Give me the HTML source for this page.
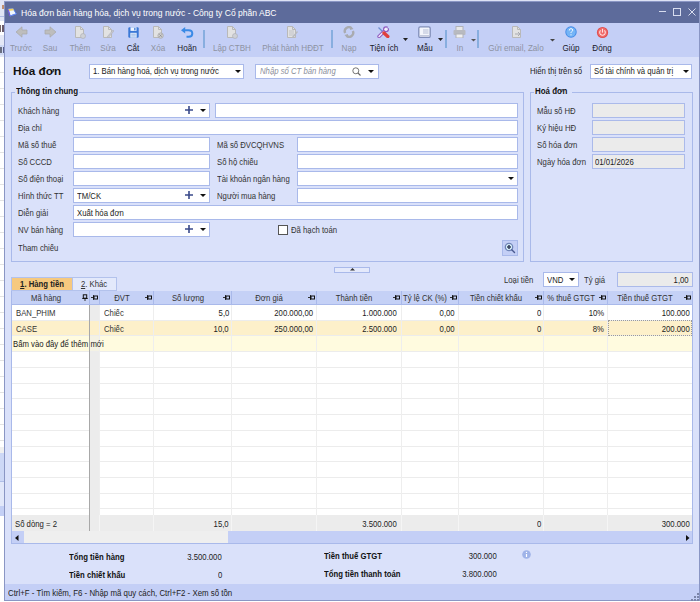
<!DOCTYPE html>
<html><head><meta charset="utf-8"><style>
html,body{margin:0;padding:0;width:700px;height:602px;overflow:hidden;position:relative;background:#f2f4fb}
.b{position:absolute;display:block}
.t{position:absolute;white-space:nowrap;font-family:"Liberation Sans",sans-serif}
</style></head><body>
<div class=b style='left:0px;top:0px;width:700px;height:602px;background:#ffffff;'></div>
<div class=b style='left:0px;top:0px;width:4px;height:21px;background:#e0e5f5;'></div>
<div class=b style='left:0px;top:16px;width:4px;height:1px;background:#b0bde6;'></div>
<div class=b style='left:2px;top:5px;width:2px;height:4px;background:#c09070;'></div>
<div class=b style='left:0px;top:21px;width:4px;height:14px;background:#ffffff;'></div>
<div class=b style='left:0px;top:25px;width:1px;height:7px;background:#7a6a6a;'></div>
<div class=b style='left:2px;top:25px;width:2px;height:7px;background:#6a5a6a;'></div>
<div class=b style='left:0px;top:35px;width:4px;height:10px;background:#e4e8f6;'></div>
<div class=b style='left:0px;top:45px;width:4px;height:10px;background:#d0daf5;'></div>
<div class=b style='left:0px;top:47px;width:2px;height:6px;background:#6a6f80;'></div>
<div class=b style='left:3px;top:47px;width:1px;height:6px;background:#5a6090;'></div>
<div class=b style='left:0px;top:55px;width:4px;height:2px;background:#e0e6f8;'></div>
<div class=b style='left:0px;top:72px;width:4px;height:1px;background:#e3e3e3;'></div>
<div class=b style='left:0px;top:88px;width:4px;height:1px;background:#e3e3e3;'></div>
<div class=b style='left:0px;top:104px;width:4px;height:1px;background:#e3e3e3;'></div>
<div class=b style='left:0px;top:120px;width:4px;height:1px;background:#e3e3e3;'></div>
<div class=b style='left:0px;top:136px;width:4px;height:1px;background:#e3e3e3;'></div>
<div class=b style='left:0px;top:152px;width:4px;height:1px;background:#e3e3e3;'></div>
<div class=b style='left:0px;top:168px;width:4px;height:1px;background:#e3e3e3;'></div>
<div class=b style='left:0px;top:184px;width:4px;height:1px;background:#e3e3e3;'></div>
<div class=b style='left:0px;top:200px;width:4px;height:1px;background:#e3e3e3;'></div>
<div class=b style='left:0px;top:216px;width:4px;height:1px;background:#e3e3e3;'></div>
<div class=b style='left:0px;top:232px;width:4px;height:1px;background:#e3e3e3;'></div>
<div class=b style='left:0px;top:248px;width:4px;height:1px;background:#e3e3e3;'></div>
<div class=b style='left:0px;top:264px;width:4px;height:1px;background:#e3e3e3;'></div>
<div class=b style='left:0px;top:280px;width:4px;height:1px;background:#e3e3e3;'></div>
<div class=b style='left:0px;top:296px;width:4px;height:1px;background:#e3e3e3;'></div>
<div class=b style='left:0px;top:312px;width:4px;height:1px;background:#e3e3e3;'></div>
<div class=b style='left:0px;top:328px;width:4px;height:1px;background:#e3e3e3;'></div>
<div class=b style='left:0px;top:344px;width:4px;height:1px;background:#e3e3e3;'></div>
<div class=b style='left:0px;top:360px;width:4px;height:1px;background:#e3e3e3;'></div>
<div class=b style='left:0px;top:376px;width:4px;height:1px;background:#e3e3e3;'></div>
<div class=b style='left:0px;top:392px;width:4px;height:1px;background:#e3e3e3;'></div>
<div class=b style='left:0px;top:408px;width:4px;height:1px;background:#e3e3e3;'></div>
<div class=b style='left:0px;top:424px;width:4px;height:1px;background:#e3e3e3;'></div>
<div class=b style='left:0px;top:440px;width:4px;height:1px;background:#e3e3e3;'></div>
<div class=b style='left:0px;top:456px;width:4px;height:1px;background:#e3e3e3;'></div>
<div class=b style='left:0px;top:472px;width:4px;height:1px;background:#e3e3e3;'></div>
<div class=b style='left:0px;top:488px;width:4px;height:1px;background:#e3e3e3;'></div>
<div class=b style='left:0px;top:504px;width:4px;height:1px;background:#e3e3e3;'></div>
<div class=b style='left:0px;top:520px;width:4px;height:1px;background:#e3e3e3;'></div>
<div class=b style='left:0px;top:536px;width:4px;height:1px;background:#e3e3e3;'></div>
<div class=b style='left:0px;top:552px;width:4px;height:1px;background:#e3e3e3;'></div>
<div class=b style='left:0px;top:568px;width:4px;height:1px;background:#e3e3e3;'></div>
<div class=b style='left:0px;top:584px;width:4px;height:1px;background:#e3e3e3;'></div>
<div class=b style='left:0px;top:600px;width:4px;height:1px;background:#e3e3e3;'></div>
<div class=b style='left:0px;top:447px;width:4px;height:6px;background:#f0f0f0;'></div>
<div class=b style='left:0px;top:453px;width:4px;height:28px;background:#cdd8f6;'></div>
<div class=b style='left:0px;top:481px;width:4px;height:1px;background:#b0bfe8;'></div>
<div class=b style='left:0px;top:482px;width:4px;height:24px;background:#e2e8fa;'></div>
<div class=b style='left:0px;top:506px;width:4px;height:10px;background:#c3cff5;'></div>
<div class=b style='left:0px;top:516px;width:4px;height:86px;background:#ffffff;'></div>
<div class=b style='left:0px;top:0px;width:700px;height:1px;background:#dde2f5;'></div>
<div class=b style='left:4px;top:1px;width:696px;height:600px;background:#8a96c4;'></div>
<div class=b style='left:5px;top:2px;width:694px;height:21px;background:#5d6b9b;'></div>
<div class=b style='left:5px;top:23px;width:694px;height:34px;background:#c4cff6;'></div>
<div class=b style='left:5px;top:57px;width:694px;height:527px;background:#dae1fa;'></div>
<div class=b style='left:5px;top:584px;width:694px;height:16px;background:#c4cff6;'></div>
<svg class=b style='left:6px;top:6px' width=12 height=12 viewBox='0 0 12 12'><path d='M2 3 L7 2.5 L10.3 7.8 L4 10 Z' fill='#eef6ff' stroke='#4f7ae8' stroke-width='.9'/><path d='M2 3 L7 2.5 L8 4.2 L2.6 5 Z' fill='#f0d060'/><path d='M2.2 3.5 L4 10' stroke='#7a5ad8' stroke-width='1.1'/><path d='M4 10 L10.3 7.8' stroke='#6a8af0' stroke-width='.9'/></svg>
<div class=t style='top:6.5px;font-size:9.5px;line-height:12.5px;color:#ffffff;font-weight:normal;left:21px;transform:scaleX(0.9);transform-origin:0 0;'>Hóa đơn bán hàng hóa, dịch vụ trong nước - Công ty Cổ phần ABC</div>
<div class=b style='left:659px;top:11px;width:7px;height:1px;background:#d8ddef;'></div>
<svg class=b style='left:672px;top:7px' width=9 height=10 viewBox='0 0 9 10'><rect x='1.5' y='1.5' width='7' height='7' fill='none' stroke='#d8ddef'/></svg>
<svg class=b style='left:687px;top:7px' width=10 height=10 viewBox='0 0 10 10'><path d='M1.5 1.5 L8.5 8.5 M8.5 1.5 L1.5 8.5' stroke='#d8ddef' stroke-width='1'/></svg>
<svg class=b style='left:15px;top:26px' width=14 height=12 viewBox='0 0 14 12'><path d='M1 6 L7 .8 L7 4 L12 4 L12 8 L7 8 L7 11.2 Z' fill='#bdbdbd' stroke='#a8a8a8' stroke-width='.7'/></svg>
<div class=t style='top:41.6px;font-size:9.6px;line-height:12.6px;color:#8e93a3;font-weight:normal;left:21px;transform:translateX(-50%) scaleX(0.84375);'>Trước</div>
<svg class=b style='left:43px;top:26px' width=14 height=12 viewBox='0 0 14 12'><path d='M13 6 L7 .8 L7 4 L2 4 L2 8 L7 8 L7 11.2 Z' fill='#bdbdbd' stroke='#a8a8a8' stroke-width='.7'/></svg>
<div class=t style='top:41.6px;font-size:9.6px;line-height:12.6px;color:#8e93a3;font-weight:normal;left:50px;transform:translateX(-50%) scaleX(0.84375);'>Sau</div>
<svg class=b style='left:74px;top:26px' width=12 height=13 viewBox='0 0 12 13'><path d='M1.5 .5 L6.5 .5 L9.5 3.5 L9.5 11.5 L1.5 11.5 Z' fill='#e2e2e2' stroke='#b9b9b9'/><path d='M6.5 .5 L6.5 3.5 L9.5 3.5' fill='none' stroke='#b9b9b9'/><circle cx='9' cy='10' r='2.5' fill='#cfd1d6' stroke='#a9abb2' stroke-width='.6'/></svg>
<div class=t style='top:41.6px;font-size:9.6px;line-height:12.6px;color:#8e93a3;font-weight:normal;left:80px;transform:translateX(-50%) scaleX(0.84375);'>Thêm</div>
<svg class=b style='left:102px;top:26px' width=12 height=13 viewBox='0 0 12 13'><path d='M1.5 .5 L6.5 .5 L9.5 3.5 L9.5 11.5 L1.5 11.5 Z' fill='#e2e2e2' stroke='#b9b9b9'/><path d='M6.5 .5 L6.5 3.5 L9.5 3.5' fill='none' stroke='#b9b9b9'/><path d='M5 11 L11 4 L12 5 L6 12 Z' fill='#c8cad0' stroke='#a9abb2' stroke-width='.5'/></svg>
<div class=t style='top:41.6px;font-size:9.6px;line-height:12.6px;color:#8e93a3;font-weight:normal;left:108px;transform:translateX(-50%) scaleX(0.84375);'>Sửa</div>
<svg class=b style='left:128px;top:27px' width=11 height=11 viewBox='0 0 11 11'><rect x='.3' y='.3' width='10.4' height='10.4' rx='1.2' fill='#3b78d6'/><rect x='2.5' y='.3' width='6' height='3.6' fill='#eef4ff'/><rect x='6.2' y='.9' width='1.3' height='2.4' fill='#3b78d6'/><rect x='2.3' y='5.8' width='6.4' height='4.9' fill='#dce8fa'/><path d='M3.3 7.3 L7.7 7.3 M3.3 8.9 L7.7 8.9' stroke='#8fb0e0' stroke-width='.7'/></svg>
<div class=t style='top:41.6px;font-size:9.6px;line-height:12.6px;color:#1a1a2a;font-weight:normal;left:133px;transform:translateX(-50%) scaleX(0.84375);'>Cắt</div>
<svg class=b style='left:152px;top:26px' width=12 height=13 viewBox='0 0 12 13'><path d='M1.5 .5 L6.5 .5 L9.5 3.5 L9.5 11.5 L1.5 11.5 Z' fill='#e2e2e2' stroke='#b9b9b9'/><path d='M6.5 .5 L6.5 3.5 L9.5 3.5' fill='none' stroke='#b9b9b9'/><circle cx='8.6' cy='9.6' r='2.7' fill='#d0d0d0' stroke='#a8a8a8' stroke-width='.8'/><path d='M7.4 8.4 L9.8 10.8 M9.8 8.4 L7.4 10.8' stroke='#8a8a8a' stroke-width='.8'/></svg>
<div class=t style='top:41.6px;font-size:9.6px;line-height:12.6px;color:#8e93a3;font-weight:normal;left:158px;transform:translateX(-50%) scaleX(0.84375);'>Xóa</div>
<svg class=b style='left:181px;top:27px' width=13 height=11 viewBox='0 0 13 11'><path d='M0 3.2 L4.2 0 L4.2 6.4 Z' fill='#3a8ae6'/><path d='M3.5 3.2 L7.5 3.2 Q11.3 3.2 11.3 6.6 Q11.3 9.8 7.8 9.8 L5.5 9.8' fill='none' stroke='#3a8ae6' stroke-width='2'/></svg>
<div class=t style='top:41.6px;font-size:9.6px;line-height:12.6px;color:#1a1a2a;font-weight:normal;left:187px;transform:translateX(-50%) scaleX(0.84375);'>Hoãn</div>
<div class=b style='left:203px;top:30px;width:2px;height:18px;background:#88aedf;'></div>
<svg class=b style='left:226px;top:26px' width=12 height=13 viewBox='0 0 12 13'><path d='M1.5 .5 L6.5 .5 L9.5 3.5 L9.5 11.5 L1.5 11.5 Z' fill='#e2e2e2' stroke='#b9b9b9'/><path d='M6.5 .5 L6.5 3.5 L9.5 3.5' fill='none' stroke='#b9b9b9'/><circle cx='9' cy='10' r='2.5' fill='#cfd1d6' stroke='#a9abb2' stroke-width='.6'/></svg>
<div class=t style='top:41.6px;font-size:9.6px;line-height:12.6px;color:#8e93a3;font-weight:normal;left:232px;transform:translateX(-50%) scaleX(0.84375);'>Lập CTBH</div>
<svg class=b style='left:286px;top:26px' width=12 height=13 viewBox='0 0 12 13'><path d='M1.5 .5 L6.5 .5 L9.5 3.5 L9.5 11.5 L1.5 11.5 Z' fill='#e2e2e2' stroke='#b9b9b9'/><path d='M6.5 .5 L6.5 3.5 L9.5 3.5' fill='none' stroke='#b9b9b9'/><path d='M3 5 L8 5 M3 7 L8 7 M3 9 L8 9' stroke='#c0c2c8'/><path d='M6 11 L11 5 L12 6 L7 12 Z' fill='#b8bac0'/></svg>
<div class=t style='top:41.6px;font-size:9.6px;line-height:12.6px;color:#8e93a3;font-weight:normal;left:293px;transform:translateX(-50%) scaleX(0.84375);'>Phát hành HĐĐT</div>
<div class=b style='left:331px;top:30px;width:2px;height:18px;background:#88aedf;'></div>
<svg class=b style='left:343px;top:26px' width=12 height=12 viewBox='0 0 12 12'><path d='M2.2 7 A4 4 0 0 1 8.5 2.3' fill='none' stroke='#a9abb0' stroke-width='2.4'/><path d='M9.8 5 A4 4 0 0 1 3.5 9.7' fill='none' stroke='#a9abb0' stroke-width='2.4'/><path d='M7.5 0 L10.5 3 L7 4 Z' fill='#a9abb0'/><path d='M4.5 12 L1.5 9 L5 8 Z' fill='#a9abb0'/></svg>
<div class=t style='top:41.6px;font-size:9.6px;line-height:12.6px;color:#8e93a3;font-weight:normal;left:349px;transform:translateX(-50%) scaleX(0.84375);'>Nạp</div>
<svg class=b style='left:377px;top:26px' width=13 height=12 viewBox='0 0 13 12'><path d='M1.5 1.5 L6.5 6.5' stroke='#6f8fd0' stroke-width='1.3'/><path d='M2 10.5 L7.5 5' stroke='#8f5bbf' stroke-width='3.4' stroke-linecap='round'/><path d='M2 10.5 L7.5 5' stroke='#f6f0fb' stroke-width='1.3' stroke-linecap='round'/><circle cx='9' cy='3.3' r='3' fill='#8f5bbf'/><circle cx='9' cy='3.3' r='1.7' fill='#f6f0fb'/><path d='M9 3.3 L12 0 L13 1.5 Z' fill='#c4cff6'/><path d='M7 7 L10.8 10.6' stroke='#e0403c' stroke-width='3.4' stroke-linecap='round'/></svg>
<div class=t style='top:41.6px;font-size:9.6px;line-height:12.6px;color:#1a1a2a;font-weight:normal;left:384px;transform:translateX(-50%) scaleX(0.84375);'>Tiện ích</div>
<svg class=b style='left:403px;top:38px' width=6 height=4 viewBox='0 0 6 4'><path d='M0 0 L5 0 L2.5 3 Z' fill='#222'/></svg>
<svg class=b style='left:418px;top:26px' width=13 height=12 viewBox='0 0 13 12'><rect x='.8' y='.8' width='11.4' height='10.6' rx='1.5' fill='#f3f5fb' stroke='#7f8db8' stroke-width='1.3'/><rect x='2' y='9' width='9' height='1.6' fill='#c3c9dc'/><rect x='5' y='3' width='5.5' height='5' fill='#d4d9e8'/></svg>
<div class=t style='top:41.6px;font-size:9.6px;line-height:12.6px;color:#1a1a2a;font-weight:normal;left:425px;transform:translateX(-50%) scaleX(0.84375);'>Mẫu</div>
<svg class=b style='left:438px;top:38px' width=6 height=4 viewBox='0 0 6 4'><path d='M0 0 L5 0 L2.5 3 Z' fill='#222'/></svg>
<div class=b style='left:445px;top:30px;width:2px;height:18px;background:#88aedf;'></div>
<svg class=b style='left:453px;top:26px' width=13 height=12 viewBox='0 0 13 12'><rect x='3' y='.5' width='7' height='4' fill='#e8e8e8' stroke='#b0b2b8'/><rect x='.5' y='4' width='12' height='5' rx='1' fill='#b8bac0'/><rect x='3' y='8' width='7' height='4' fill='#f0f0f0' stroke='#b0b2b8'/></svg>
<div class=t style='top:41.6px;font-size:9.6px;line-height:12.6px;color:#8e93a3;font-weight:normal;left:460px;transform:translateX(-50%) scaleX(0.84375);'>In</div>
<svg class=b style='left:471px;top:39px' width=5 height=3 viewBox='0 0 5 3'><path d='M0 0 L5 0 L2.5 2.5 Z' fill='#555'/></svg>
<div class=b style='left:477px;top:30px;width:2px;height:18px;background:#88aedf;'></div>
<svg class=b style='left:511px;top:26px' width=12 height=13 viewBox='0 0 12 13'><path d='M1.5 .5 L6.5 .5 L9.5 3.5 L9.5 11.5 L1.5 11.5 Z' fill='#e2e2e2' stroke='#b9b9b9'/><path d='M6.5 .5 L6.5 3.5 L9.5 3.5' fill='none' stroke='#b9b9b9'/><path d='M4 8 L9 8 M7 6 L9 8 L7 10' stroke='#a9abb2' fill='none'/></svg>
<div class=t style='top:41.6px;font-size:9.6px;line-height:12.6px;color:#8e93a3;font-weight:normal;left:516px;transform:translateX(-50%) scaleX(0.84375);'>Gửi email, Zalo</div>
<svg class=b style='left:550px;top:39px' width=5 height=3 viewBox='0 0 5 3'><path d='M0 0 L5 0 L2.5 2.5 Z' fill='#444'/></svg>
<svg class=b style='left:565px;top:26px' width=12 height=12 viewBox='0 0 12 12'><circle cx='6' cy='6' r='5.7' fill='#3f88e6'/><circle cx='6' cy='6' r='4.8' fill='#74b4f6'/><path d='M4.3 4.5 Q4.3 2.6 6 2.6 Q7.7 2.6 7.7 4.2 Q7.7 5.2 6.6 5.7 Q6 6 6 7' fill='none' stroke='#fff' stroke-width='.9'/><circle cx='6' cy='8.8' r='.6' fill='#fff'/></svg>
<div class=t style='top:41.6px;font-size:9.6px;line-height:12.6px;color:#1a1a2a;font-weight:normal;left:571px;transform:translateX(-50%) scaleX(0.84375);'>Giúp</div>
<svg class=b style='left:596px;top:26px' width=13 height=13 viewBox='0 0 13 13'><circle cx='6.5' cy='6.5' r='5.6' fill='#de4a4a'/><circle cx='6.5' cy='6.5' r='4.7' fill='#f06a6a'/><path d='M4.6 4.4 A2.8 2.8 0 1 0 8.4 4.4' fill='none' stroke='#ffe0e0' stroke-width='1.1'/><path d='M6.5 2.8 L6.5 6.6' stroke='#ffe0e0' stroke-width='1.1'/></svg>
<div class=t style='top:41.6px;font-size:9.6px;line-height:12.6px;color:#1a1a2a;font-weight:normal;left:602px;transform:translateX(-50%) scaleX(0.84375);'>Đóng</div>
<div class=t style='top:64px;font-size:11px;line-height:14px;color:#111;font-weight:bold;left:13px;transform:scaleX(1.07);transform-origin:0 0;'>Hóa đơn</div>
<div class=b style='left:89px;top:64px;width:155px;height:15px;background:#fff;border:1px solid #a9b9ea;box-sizing:border-box;'></div>
<div class=t style='top:64.6px;font-size:9.6px;line-height:12.6px;color:#222;font-weight:normal;left:93px;transform:scaleX(0.80625);transform-origin:0 0;'>1. Bán hàng hoá, dịch vụ trong nước</div>
<svg class=b style='left:235px;top:70px' width=6 height=4 viewBox='0 0 6 4'><path d='M0 0 L6 0 L3 3 Z' fill='#111'/></svg>
<div class=b style='left:255px;top:64px;width:124px;height:15px;background:#fff;border:1px solid #a9b9ea;box-sizing:border-box;'></div>
<div class=t style='top:64.6px;font-size:9.6px;line-height:12.6px;color:#8a8e9a;font-weight:normal;font-style:italic;left:260px;transform:scaleX(0.80625);transform-origin:0 0;'>Nhập số CT bán hàng</div>
<svg class=b style='left:352px;top:67px' width=9 height=9 viewBox='0 0 9 9'><circle cx='3.8' cy='3.8' r='3' fill='none' stroke='#666' stroke-width='.9'/><path d='M6 6 L8.5 8.5' stroke='#666' stroke-width='1.1'/></svg>
<svg class=b style='left:368px;top:70px' width=6 height=4 viewBox='0 0 6 4'><path d='M0 0 L6 0 L3 3 Z' fill='#111'/></svg>
<div class=t style='top:64.6px;font-size:9.6px;line-height:12.6px;color:#222;font-weight:normal;left:530px;transform:scaleX(0.80625);transform-origin:0 0;'>Hiển thị trên sổ</div>
<div class=b style='left:590px;top:64px;width:102px;height:15px;background:#fff;border:1px solid #a9b9ea;box-sizing:border-box;'></div>
<div class=t style='top:64.6px;font-size:9.6px;line-height:12.6px;color:#222;font-weight:normal;left:594px;transform:scaleX(0.80625);transform-origin:0 0;'>Sổ tài chính và quản trị</div>
<svg class=b style='left:683px;top:70px' width=6 height=4 viewBox='0 0 6 4'><path d='M0 0 L6 0 L3 3 Z' fill='#111'/></svg>
<div class=b style='left:11px;top:92px;width:513px;height:170px;border:1px solid #a9b9ea;box-sizing:border-box;'></div>
<div class=b style='left:15px;top:88px;width:64px;height:9px;background:#dae1fa;'></div>
<div class=t style='top:84.6px;font-size:9.6px;line-height:12.6px;color:#111;font-weight:bold;left:16px;transform:scaleX(0.8250000000000001);transform-origin:0 0;'>Thông tin chung</div>
<div class=b style='left:530px;top:92px;width:163px;height:170px;border:1px solid #a9b9ea;box-sizing:border-box;'></div>
<div class=b style='left:534px;top:88px;width:38px;height:9px;background:#dae1fa;'></div>
<div class=t style='top:84.6px;font-size:9.6px;line-height:12.6px;color:#111;font-weight:bold;left:535px;transform:scaleX(0.8250000000000001);transform-origin:0 0;'>Hoá đơn</div>
<div class=t style='top:104.6px;font-size:9.6px;line-height:12.6px;color:#333;font-weight:normal;left:18px;transform:scaleX(0.80625);transform-origin:0 0;'>Khách hàng</div>
<div class=t style='top:121.6px;font-size:9.6px;line-height:12.6px;color:#333;font-weight:normal;left:18px;transform:scaleX(0.80625);transform-origin:0 0;'>Địa chỉ</div>
<div class=t style='top:138.6px;font-size:9.6px;line-height:12.6px;color:#333;font-weight:normal;left:18px;transform:scaleX(0.80625);transform-origin:0 0;'>Mã số thuế</div>
<div class=t style='top:155.6px;font-size:9.6px;line-height:12.6px;color:#333;font-weight:normal;left:18px;transform:scaleX(0.80625);transform-origin:0 0;'>Số CCCD</div>
<div class=t style='top:172.6px;font-size:9.6px;line-height:12.6px;color:#333;font-weight:normal;left:18px;transform:scaleX(0.80625);transform-origin:0 0;'>Số điện thoại</div>
<div class=t style='top:189.6px;font-size:9.6px;line-height:12.6px;color:#333;font-weight:normal;left:18px;transform:scaleX(0.80625);transform-origin:0 0;'>Hình thức TT</div>
<div class=t style='top:206.6px;font-size:9.6px;line-height:12.6px;color:#333;font-weight:normal;left:18px;transform:scaleX(0.80625);transform-origin:0 0;'>Diễn giải</div>
<div class=t style='top:223.6px;font-size:9.6px;line-height:12.6px;color:#333;font-weight:normal;left:18px;transform:scaleX(0.80625);transform-origin:0 0;'>NV bán hàng</div>
<div class=t style='top:242.1px;font-size:9.6px;line-height:12.6px;color:#333;font-weight:normal;left:18px;transform:scaleX(0.80625);transform-origin:0 0;'>Tham chiếu</div>
<div class=b style='left:73px;top:103px;width:137px;height:15px;background:#fff;border:1px solid #a9b9ea;box-sizing:border-box;'></div>
<svg class=b style='left:185px;top:106px' width=8 height=8 viewBox='0 0 8 8'><path d='M4 0 L4 8 M0 4 L8 4' stroke='#3a4a8a' stroke-width='1.6'/></svg>
<svg class=b style='left:200px;top:109px' width=6 height=4 viewBox='0 0 6 4'><path d='M0 0 L6 0 L3 3 Z' fill='#111'/></svg>
<div class=b style='left:215px;top:103px;width:303px;height:15px;background:#fff;border:1px solid #a9b9ea;box-sizing:border-box;'></div>
<div class=b style='left:73px;top:120px;width:445px;height:15px;background:#fff;border:1px solid #a9b9ea;box-sizing:border-box;'></div>
<div class=b style='left:73px;top:137px;width:137px;height:15px;background:#fff;border:1px solid #a9b9ea;box-sizing:border-box;'></div>
<div class=b style='left:297px;top:137px;width:221px;height:15px;background:#fff;border:1px solid #a9b9ea;box-sizing:border-box;'></div>
<div class=t style='top:138.6px;font-size:9.6px;line-height:12.6px;color:#333;font-weight:normal;left:217px;transform:scaleX(0.80625);transform-origin:0 0;'>Mã số ĐVCQHVNS</div>
<div class=b style='left:73px;top:154px;width:137px;height:15px;background:#fff;border:1px solid #a9b9ea;box-sizing:border-box;'></div>
<div class=b style='left:297px;top:154px;width:221px;height:15px;background:#fff;border:1px solid #a9b9ea;box-sizing:border-box;'></div>
<div class=t style='top:155.6px;font-size:9.6px;line-height:12.6px;color:#333;font-weight:normal;left:217px;transform:scaleX(0.80625);transform-origin:0 0;'>Số hộ chiếu</div>
<div class=b style='left:73px;top:171px;width:137px;height:15px;background:#fff;border:1px solid #a9b9ea;box-sizing:border-box;'></div>
<div class=b style='left:297px;top:171px;width:221px;height:15px;background:#fff;border:1px solid #a9b9ea;box-sizing:border-box;'></div>
<div class=t style='top:172.6px;font-size:9.6px;line-height:12.6px;color:#333;font-weight:normal;left:217px;transform:scaleX(0.80625);transform-origin:0 0;'>Tài khoản ngân hàng</div>
<svg class=b style='left:508px;top:177px' width=6 height=4 viewBox='0 0 6 4'><path d='M0 0 L6 0 L3 3 Z' fill='#111'/></svg>
<div class=b style='left:73px;top:188px;width:137px;height:15px;background:#fff;border:1px solid #a9b9ea;box-sizing:border-box;'></div>
<svg class=b style='left:185px;top:191px' width=8 height=8 viewBox='0 0 8 8'><path d='M4 0 L4 8 M0 4 L8 4' stroke='#3a4a8a' stroke-width='1.6'/></svg>
<svg class=b style='left:200px;top:194px' width=6 height=4 viewBox='0 0 6 4'><path d='M0 0 L6 0 L3 3 Z' fill='#111'/></svg>
<div class=t style='top:189.6px;font-size:9.6px;line-height:12.6px;color:#222;font-weight:normal;left:77px;transform:scaleX(0.80625);transform-origin:0 0;'>TM/CK</div>
<div class=b style='left:297px;top:188px;width:221px;height:15px;background:#fff;border:1px solid #a9b9ea;box-sizing:border-box;'></div>
<div class=t style='top:189.6px;font-size:9.6px;line-height:12.6px;color:#333;font-weight:normal;left:217px;transform:scaleX(0.80625);transform-origin:0 0;'>Người mua hàng</div>
<div class=b style='left:73px;top:205px;width:445px;height:15px;background:#fff;border:1px solid #a9b9ea;box-sizing:border-box;'></div>
<div class=t style='top:206.6px;font-size:9.6px;line-height:12.6px;color:#222;font-weight:normal;left:77px;transform:scaleX(0.80625);transform-origin:0 0;'>Xuất hóa đơn</div>
<div class=b style='left:73px;top:222px;width:137px;height:15px;background:#fff;border:1px solid #a9b9ea;box-sizing:border-box;'></div>
<svg class=b style='left:185px;top:225px' width=8 height=8 viewBox='0 0 8 8'><path d='M4 0 L4 8 M0 4 L8 4' stroke='#3a4a8a' stroke-width='1.6'/></svg>
<svg class=b style='left:200px;top:228px' width=6 height=4 viewBox='0 0 6 4'><path d='M0 0 L6 0 L3 3 Z' fill='#111'/></svg>
<div class=b style='left:278px;top:225px;width:10px;height:10px;background:#fff;border:1px solid #555;box-sizing:border-box;'></div>
<div class=t style='top:223.6px;font-size:9.6px;line-height:12.6px;color:#333;font-weight:normal;left:291px;transform:scaleX(0.80625);transform-origin:0 0;'>Đã hạch toán</div>
<div class=b style='left:502px;top:240px;width:16px;height:16px;background:#c4cff6;border:1px solid #a9b9ea;box-sizing:border-box;'></div>
<svg class=b style='left:504px;top:242px' width=12 height=12 viewBox='0 0 12 12'><circle cx='5' cy='5' r='3.7' fill='#d8f0fa' stroke='#7085b8' stroke-width='1.3'/><path d='M3 5 L7 5 M5 3 L5 7' stroke='#3a4460' stroke-width='1.6'/><path d='M7.8 7.8 L10.5 10.5' stroke='#4a5a90' stroke-width='1.4' stroke-linecap='round'/></svg>
<div class=t style='top:104.6px;font-size:9.6px;line-height:12.6px;color:#333;font-weight:normal;left:537px;transform:scaleX(0.80625);transform-origin:0 0;'>Mẫu số HĐ</div>
<div class=b style='left:592px;top:103px;width:93px;height:15px;background:#ebebeb;border:1px solid #abbaea;box-sizing:border-box;'></div>
<div class=t style='top:121.6px;font-size:9.6px;line-height:12.6px;color:#333;font-weight:normal;left:537px;transform:scaleX(0.80625);transform-origin:0 0;'>Ký hiệu HĐ</div>
<div class=b style='left:592px;top:120px;width:93px;height:15px;background:#ebebeb;border:1px solid #abbaea;box-sizing:border-box;'></div>
<div class=t style='top:138.6px;font-size:9.6px;line-height:12.6px;color:#333;font-weight:normal;left:537px;transform:scaleX(0.80625);transform-origin:0 0;'>Số hóa đơn</div>
<div class=b style='left:592px;top:137px;width:93px;height:15px;background:#ebebeb;border:1px solid #abbaea;box-sizing:border-box;'></div>
<div class=t style='top:155.6px;font-size:9.6px;line-height:12.6px;color:#333;font-weight:normal;left:537px;transform:scaleX(0.80625);transform-origin:0 0;'>Ngày hóa đơn</div>
<div class=b style='left:592px;top:154px;width:93px;height:15px;background:#ebebeb;border:1px solid #abbaea;box-sizing:border-box;'></div>
<div class=t style='top:155.6px;font-size:9.6px;line-height:12.6px;color:#222;font-weight:normal;left:595px;transform:scaleX(0.80625);transform-origin:0 0;'>01/01/2026</div>
<div class=b style='left:334px;top:267px;width:36px;height:6px;background:#e4e9fb;border:1px solid #a9b9ea;box-sizing:border-box;'></div>
<svg class=b style='left:350px;top:268px' width=5 height=3 viewBox='0 0 5 3'><path d='M0 2.5 L5 2.5 L2.5 0 Z' fill='#333'/></svg>
<div class=t style='top:273.6px;font-size:9.6px;line-height:12.6px;color:#333;font-weight:normal;left:504px;transform:scaleX(0.80625);transform-origin:0 0;'>Loại tiền</div>
<div class=b style='left:543px;top:272px;width:36px;height:15px;background:#fff;border:1px solid #a9b9ea;box-sizing:border-box;'></div>
<div class=t style='top:273.6px;font-size:9.6px;line-height:12.6px;color:#222;font-weight:normal;left:547px;transform:scaleX(0.80625);transform-origin:0 0;'>VND</div>
<svg class=b style='left:569px;top:278px' width=6 height=4 viewBox='0 0 6 4'><path d='M0 0 L6 0 L3 3 Z' fill='#111'/></svg>
<div class=t style='top:273.6px;font-size:9.6px;line-height:12.6px;color:#333;font-weight:normal;left:584px;transform:scaleX(0.80625);transform-origin:0 0;'>Tỷ giá</div>
<div class=b style='left:617px;top:272px;width:76px;height:15px;background:#ebebeb;border:1px solid #abbaea;box-sizing:border-box;'></div>
<div class=t style='top:273.6px;font-size:9.6px;line-height:12.6px;color:#222;font-weight:normal;right:11px;transform:scaleX(0.80625);transform-origin:100% 0;'>1,00</div>
<div class=b style='left:11px;top:277px;width:62px;height:14px;background:#f6c97f;border:1px solid #b3c2ec;box-sizing:border-box;'></div>
<div class=t style='top:278.1px;font-size:9.6px;line-height:12.6px;color:#222;font-weight:bold;left:42px;transform:translateX(-50%) scaleX(0.80625);'><u>1</u>. Hàng tiền</div>
<div class=b style='left:72px;top:277px;width:45px;height:14px;background:#e3e9fb;border:1px solid #b3c2ec;box-sizing:border-box;'></div>
<div class=t style='top:278.1px;font-size:9.6px;line-height:12.6px;color:#333;font-weight:normal;left:94px;transform:translateX(-50%) scaleX(0.80625);'><u>2</u>. Khác</div>
<div class=b style='left:11px;top:291px;width:682px;height:253px;background:#ffffff;border:1px solid #a9b9ea;box-sizing:border-box;'></div>
<div class=b style='left:12px;top:291px;width:680px;height:14px;background:#c5d1f6;'></div>
<div class=b style='left:12px;top:304px;width:680px;height:1px;background:#a9b9ea;'></div>
<div class=b style='left:89px;top:305px;width:10px;height:210px;background:#ececec;'></div>
<div class=b style='left:12px;top:320px;width:680px;height:16px;background:#fdf0ca;'></div>
<div class=b style='left:12px;top:336px;width:680px;height:15px;background:#fffbdf;'></div>
<div class=b style='left:89px;top:336px;width:10px;height:15px;background:#f4f2e4;'></div>
<div class=b style='left:12px;top:320px;width:680px;height:1px;background:#ececec;'></div>
<div class=b style='left:12px;top:335px;width:680px;height:1px;background:#ececec;'></div>
<div class=b style='left:12px;top:351px;width:680px;height:1px;background:#ececec;'></div>
<div class=b style='left:12px;top:367px;width:680px;height:1px;background:#ececec;'></div>
<div class=b style='left:12px;top:383px;width:680px;height:1px;background:#ececec;'></div>
<div class=b style='left:12px;top:398px;width:680px;height:1px;background:#ececec;'></div>
<div class=b style='left:12px;top:414px;width:680px;height:1px;background:#ececec;'></div>
<div class=b style='left:12px;top:430px;width:680px;height:1px;background:#ececec;'></div>
<div class=b style='left:12px;top:446px;width:680px;height:1px;background:#ececec;'></div>
<div class=b style='left:12px;top:461px;width:680px;height:1px;background:#ececec;'></div>
<div class=b style='left:12px;top:477px;width:680px;height:1px;background:#ececec;'></div>
<div class=b style='left:12px;top:493px;width:680px;height:1px;background:#ececec;'></div>
<div class=b style='left:12px;top:508px;width:680px;height:1px;background:#ececec;'></div>
<div class=b style='left:89px;top:291px;width:1px;height:14px;background:#a9b9ea;'></div>
<div class=b style='left:89px;top:305px;width:1px;height:210px;background:#eeeeee;'></div>
<div class=b style='left:99px;top:291px;width:1px;height:14px;background:#a9b9ea;'></div>
<div class=b style='left:99px;top:305px;width:1px;height:210px;background:#eeeeee;'></div>
<div class=b style='left:153px;top:291px;width:1px;height:14px;background:#a9b9ea;'></div>
<div class=b style='left:153px;top:305px;width:1px;height:210px;background:#eeeeee;'></div>
<div class=b style='left:231px;top:291px;width:1px;height:14px;background:#a9b9ea;'></div>
<div class=b style='left:231px;top:305px;width:1px;height:210px;background:#eeeeee;'></div>
<div class=b style='left:316px;top:291px;width:1px;height:14px;background:#a9b9ea;'></div>
<div class=b style='left:316px;top:305px;width:1px;height:210px;background:#eeeeee;'></div>
<div class=b style='left:401px;top:291px;width:1px;height:14px;background:#a9b9ea;'></div>
<div class=b style='left:401px;top:305px;width:1px;height:210px;background:#eeeeee;'></div>
<div class=b style='left:458px;top:291px;width:1px;height:14px;background:#a9b9ea;'></div>
<div class=b style='left:458px;top:305px;width:1px;height:210px;background:#eeeeee;'></div>
<div class=b style='left:543px;top:291px;width:1px;height:14px;background:#a9b9ea;'></div>
<div class=b style='left:543px;top:305px;width:1px;height:210px;background:#eeeeee;'></div>
<div class=b style='left:607px;top:291px;width:1px;height:14px;background:#a9b9ea;'></div>
<div class=b style='left:607px;top:305px;width:1px;height:210px;background:#eeeeee;'></div>
<div class=b style='left:89px;top:305px;width:1px;height:210px;background:#a8a8a8;'></div>
<div class=t style='top:291.6px;font-size:9.6px;line-height:12.6px;color:#333;font-weight:normal;left:46px;transform:translateX(-50%) scaleX(0.80625);'>Mã hàng</div>
<div class=t style='top:291.6px;font-size:9.6px;line-height:12.6px;color:#333;font-weight:normal;left:122px;transform:translateX(-50%) scaleX(0.80625);'>ĐVT</div>
<div class=t style='top:291.6px;font-size:9.6px;line-height:12.6px;color:#333;font-weight:normal;left:188px;transform:translateX(-50%) scaleX(0.80625);'>Số lượng</div>
<div class=t style='top:291.6px;font-size:9.6px;line-height:12.6px;color:#333;font-weight:normal;left:269px;transform:translateX(-50%) scaleX(0.80625);'>Đơn giá</div>
<div class=t style='top:291.6px;font-size:9.6px;line-height:12.6px;color:#333;font-weight:normal;left:354px;transform:translateX(-50%) scaleX(0.80625);'>Thành tiền</div>
<div class=t style='top:291.6px;font-size:9.6px;line-height:12.6px;color:#333;font-weight:normal;left:425px;transform:translateX(-50%) scaleX(0.80625);'>Tỷ lệ CK (%)</div>
<div class=t style='top:291.6px;font-size:9.6px;line-height:12.6px;color:#333;font-weight:normal;left:496px;transform:translateX(-50%) scaleX(0.80625);'>Tiền chiết khấu</div>
<div class=t style='top:291.6px;font-size:9.6px;line-height:12.6px;color:#333;font-weight:normal;left:571px;transform:translateX(-50%) scaleX(0.80625);'>% thuế GTGT</div>
<div class=t style='top:291.6px;font-size:9.6px;line-height:12.6px;color:#333;font-weight:normal;left:645px;transform:translateX(-50%) scaleX(0.80625);'>Tiền thuế GTGT</div>
<svg class=b style='left:82px;top:294px' width=6 height=7 viewBox='0 0 6 7'><path d='M3 4.5 L3 7' stroke='#333' stroke-width='1'/><path d='M.3 4.5 L5.7 4.5' stroke='#111' stroke-width='1'/><rect x='1.3' y='.8' width='3.4' height='3.4' fill='none' stroke='#111' stroke-width='1'/></svg>
<svg class=b style='left:91px;top:295px' width=8 height=6 viewBox='0 0 8 6'><path d='M0 2.5 L2.5 2.5' stroke='#333' stroke-width='1'/><path d='M2.5 .2 L2.5 4.8' stroke='#111' stroke-width='1'/><rect x='3' y='1' width='3.5' height='3' fill='none' stroke='#111' stroke-width='1'/></svg>
<svg class=b style='left:145px;top:295px' width=8 height=6 viewBox='0 0 8 6'><path d='M0 2.5 L2.5 2.5' stroke='#333' stroke-width='1'/><path d='M2.5 .2 L2.5 4.8' stroke='#111' stroke-width='1'/><rect x='3' y='1' width='3.5' height='3' fill='none' stroke='#111' stroke-width='1'/></svg>
<svg class=b style='left:223px;top:295px' width=8 height=6 viewBox='0 0 8 6'><path d='M0 2.5 L2.5 2.5' stroke='#333' stroke-width='1'/><path d='M2.5 .2 L2.5 4.8' stroke='#111' stroke-width='1'/><rect x='3' y='1' width='3.5' height='3' fill='none' stroke='#111' stroke-width='1'/></svg>
<svg class=b style='left:308px;top:295px' width=8 height=6 viewBox='0 0 8 6'><path d='M0 2.5 L2.5 2.5' stroke='#333' stroke-width='1'/><path d='M2.5 .2 L2.5 4.8' stroke='#111' stroke-width='1'/><rect x='3' y='1' width='3.5' height='3' fill='none' stroke='#111' stroke-width='1'/></svg>
<svg class=b style='left:393px;top:295px' width=8 height=6 viewBox='0 0 8 6'><path d='M0 2.5 L2.5 2.5' stroke='#333' stroke-width='1'/><path d='M2.5 .2 L2.5 4.8' stroke='#111' stroke-width='1'/><rect x='3' y='1' width='3.5' height='3' fill='none' stroke='#111' stroke-width='1'/></svg>
<svg class=b style='left:450px;top:295px' width=8 height=6 viewBox='0 0 8 6'><path d='M0 2.5 L2.5 2.5' stroke='#333' stroke-width='1'/><path d='M2.5 .2 L2.5 4.8' stroke='#111' stroke-width='1'/><rect x='3' y='1' width='3.5' height='3' fill='none' stroke='#111' stroke-width='1'/></svg>
<svg class=b style='left:535px;top:295px' width=8 height=6 viewBox='0 0 8 6'><path d='M0 2.5 L2.5 2.5' stroke='#333' stroke-width='1'/><path d='M2.5 .2 L2.5 4.8' stroke='#111' stroke-width='1'/><rect x='3' y='1' width='3.5' height='3' fill='none' stroke='#111' stroke-width='1'/></svg>
<svg class=b style='left:599px;top:295px' width=8 height=6 viewBox='0 0 8 6'><path d='M0 2.5 L2.5 2.5' stroke='#333' stroke-width='1'/><path d='M2.5 .2 L2.5 4.8' stroke='#111' stroke-width='1'/><rect x='3' y='1' width='3.5' height='3' fill='none' stroke='#111' stroke-width='1'/></svg>
<svg class=b style='left:684px;top:295px' width=8 height=6 viewBox='0 0 8 6'><path d='M0 2.5 L2.5 2.5' stroke='#333' stroke-width='1'/><path d='M2.5 .2 L2.5 4.8' stroke='#111' stroke-width='1'/><rect x='3' y='1' width='3.5' height='3' fill='none' stroke='#111' stroke-width='1'/></svg>
<div class=t style='top:306.6px;font-size:9.6px;line-height:12.6px;color:#333;font-weight:normal;left:16px;transform:scaleX(0.80625);transform-origin:0 0;'>BAN_PHIM</div>
<div class=t style='top:306.6px;font-size:9.6px;line-height:12.6px;color:#333;font-weight:normal;left:104px;transform:scaleX(0.80625);transform-origin:0 0;'>Chiếc</div>
<div class=t style='top:306.6px;font-size:9.6px;line-height:12.6px;color:#222;font-weight:normal;right:471px;transform:scaleX(0.80625);transform-origin:100% 0;'>5,0</div>
<div class=t style='top:306.6px;font-size:9.6px;line-height:12.6px;color:#222;font-weight:normal;right:387px;transform:scaleX(0.80625);transform-origin:100% 0;'>200.000,00</div>
<div class=t style='top:306.6px;font-size:9.6px;line-height:12.6px;color:#222;font-weight:normal;right:303px;transform:scaleX(0.80625);transform-origin:100% 0;'>1.000.000</div>
<div class=t style='top:306.6px;font-size:9.6px;line-height:12.6px;color:#222;font-weight:normal;right:245px;transform:scaleX(0.80625);transform-origin:100% 0;'>0,00</div>
<div class=t style='top:306.6px;font-size:9.6px;line-height:12.6px;color:#222;font-weight:normal;right:159px;transform:scaleX(0.80625);transform-origin:100% 0;'>0</div>
<div class=t style='top:306.6px;font-size:9.6px;line-height:12.6px;color:#222;font-weight:normal;right:96px;transform:scaleX(0.80625);transform-origin:100% 0;'>10%</div>
<div class=t style='top:306.6px;font-size:9.6px;line-height:12.6px;color:#222;font-weight:normal;right:10px;transform:scaleX(0.80625);transform-origin:100% 0;'>100.000</div>
<div class=t style='top:322.6px;font-size:9.6px;line-height:12.6px;color:#333;font-weight:normal;left:16px;transform:scaleX(0.80625);transform-origin:0 0;'>CASE</div>
<div class=t style='top:322.6px;font-size:9.6px;line-height:12.6px;color:#333;font-weight:normal;left:104px;transform:scaleX(0.80625);transform-origin:0 0;'>Chiếc</div>
<div class=t style='top:322.6px;font-size:9.6px;line-height:12.6px;color:#222;font-weight:normal;right:471px;transform:scaleX(0.80625);transform-origin:100% 0;'>10,0</div>
<div class=t style='top:322.6px;font-size:9.6px;line-height:12.6px;color:#222;font-weight:normal;right:387px;transform:scaleX(0.80625);transform-origin:100% 0;'>250.000,00</div>
<div class=t style='top:322.6px;font-size:9.6px;line-height:12.6px;color:#222;font-weight:normal;right:303px;transform:scaleX(0.80625);transform-origin:100% 0;'>2.500.000</div>
<div class=t style='top:322.6px;font-size:9.6px;line-height:12.6px;color:#222;font-weight:normal;right:245px;transform:scaleX(0.80625);transform-origin:100% 0;'>0,00</div>
<div class=t style='top:322.6px;font-size:9.6px;line-height:12.6px;color:#222;font-weight:normal;right:159px;transform:scaleX(0.80625);transform-origin:100% 0;'>0</div>
<div class=t style='top:322.6px;font-size:9.6px;line-height:12.6px;color:#222;font-weight:normal;right:96px;transform:scaleX(0.80625);transform-origin:100% 0;'>8%</div>
<div class=t style='top:322.6px;font-size:9.6px;line-height:12.6px;color:#222;font-weight:normal;right:10px;transform:scaleX(0.80625);transform-origin:100% 0;'>200.000</div>
<div class=b style='left:608px;top:320px;width:84px;height:16px;border:1px dotted #9a9a9a;box-sizing:border-box'></div>
<div class=t style='top:337.6px;font-size:9.6px;line-height:12.6px;color:#222;font-weight:normal;left:13px;transform:scaleX(0.80625);transform-origin:0 0;'>Bấm vào đây để thêm mới</div>
<div class=b style='left:12px;top:515px;width:680px;height:16px;background:#ececec;'></div>
<div class=b style='left:99px;top:515px;width:1px;height:16px;background:#f5f5f5;'></div>
<div class=b style='left:153px;top:515px;width:1px;height:16px;background:#f5f5f5;'></div>
<div class=b style='left:231px;top:515px;width:1px;height:16px;background:#f5f5f5;'></div>
<div class=b style='left:316px;top:515px;width:1px;height:16px;background:#f5f5f5;'></div>
<div class=b style='left:401px;top:515px;width:1px;height:16px;background:#f5f5f5;'></div>
<div class=b style='left:458px;top:515px;width:1px;height:16px;background:#f5f5f5;'></div>
<div class=b style='left:543px;top:515px;width:1px;height:16px;background:#f5f5f5;'></div>
<div class=b style='left:607px;top:515px;width:1px;height:16px;background:#f5f5f5;'></div>
<div class=b style='left:89px;top:515px;width:1px;height:16px;background:#a8a8a8;'></div>
<div class=t style='top:517.6px;font-size:9.6px;line-height:12.6px;color:#222;font-weight:normal;left:15px;transform:scaleX(0.80625);transform-origin:0 0;'>Số dòng = 2</div>
<div class=t style='top:517.6px;font-size:9.6px;line-height:12.6px;color:#222;font-weight:normal;right:471px;transform:scaleX(0.80625);transform-origin:100% 0;'>15,0</div>
<div class=t style='top:517.6px;font-size:9.6px;line-height:12.6px;color:#222;font-weight:normal;right:303px;transform:scaleX(0.80625);transform-origin:100% 0;'>3.500.000</div>
<div class=t style='top:517.6px;font-size:9.6px;line-height:12.6px;color:#222;font-weight:normal;right:159px;transform:scaleX(0.80625);transform-origin:100% 0;'>0</div>
<div class=t style='top:517.6px;font-size:9.6px;line-height:12.6px;color:#222;font-weight:normal;right:10px;transform:scaleX(0.80625);transform-origin:100% 0;'>300.000</div>
<div class=b style='left:12px;top:531px;width:680px;height:12px;background:#efefef;'></div>
<div class=b style='left:12px;top:531px;width:12px;height:12px;background:#c4cff6;'></div>
<div class=b style='left:228px;top:531px;width:464px;height:12px;background:#c4cff6;'></div>
<svg class=b style='left:15px;top:535px' width=4 height=6 viewBox='0 0 4 6'><path d='M3.5 0 L3.5 6 L0 3 Z' fill='#111'/></svg>
<svg class=b style='left:686px;top:535px' width=4 height=6 viewBox='0 0 4 6'><path d='M0 0 L0 6 L3.5 3 Z' fill='#111'/></svg>
<div class=t style='top:550.6px;font-size:9.6px;line-height:12.6px;color:#111;font-weight:bold;left:69px;transform:scaleX(0.80625);transform-origin:0 0;'>Tổng tiền hàng</div>
<div class=t style='top:550.6px;font-size:9.6px;line-height:12.6px;color:#222;font-weight:normal;right:478px;transform:scaleX(0.80625);transform-origin:100% 0;'>3.500.000</div>
<div class=t style='top:568.6px;font-size:9.6px;line-height:12.6px;color:#111;font-weight:bold;left:69px;transform:scaleX(0.80625);transform-origin:0 0;'>Tiền chiết khấu</div>
<div class=t style='top:568.6px;font-size:9.6px;line-height:12.6px;color:#222;font-weight:normal;right:478px;transform:scaleX(0.80625);transform-origin:100% 0;'>0</div>
<div class=t style='top:549.6px;font-size:9.6px;line-height:12.6px;color:#111;font-weight:bold;left:324px;transform:scaleX(0.80625);transform-origin:0 0;'>Tiền thuế GTGT</div>
<div class=t style='top:549.6px;font-size:9.6px;line-height:12.6px;color:#222;font-weight:normal;right:203px;transform:scaleX(0.80625);transform-origin:100% 0;'>300.000</div>
<div class=t style='top:567.6px;font-size:9.6px;line-height:12.6px;color:#111;font-weight:bold;left:324px;transform:scaleX(0.80625);transform-origin:0 0;'>Tổng tiền thanh toán</div>
<div class=t style='top:567.6px;font-size:9.6px;line-height:12.6px;color:#222;font-weight:normal;right:203px;transform:scaleX(0.80625);transform-origin:100% 0;'>3.800.000</div>
<svg class=b style='left:522px;top:550px' width=9 height=9 viewBox='0 0 9 9'><circle cx='4.5' cy='4.5' r='4.3' fill='#9fb3e8'/><path d='M4.5 4 L4.5 7' stroke='#fff' stroke-width='1.2'/><circle cx='4.5' cy='2.4' r='.7' fill='#fff'/></svg>
<div class=t style='top:586.6px;font-size:9.6px;line-height:12.6px;color:#222;font-weight:normal;left:8px;transform:scaleX(0.8203125);transform-origin:0 0;'>Ctrl+F - Tìm kiếm, F6 - Nhập mã quy cách, Ctrl+F2 - Xem số tồn</div>
<div class=b style='left:697px;top:593px;width:2px;height:2px;background:#7b85a8;'></div>
<div class=b style='left:694px;top:596px;width:2px;height:2px;background:#7b85a8;'></div>
<div class=b style='left:697px;top:596px;width:2px;height:2px;background:#7b85a8;'></div>
<div class=b style='left:691px;top:599px;width:2px;height:2px;background:#7b85a8;'></div>
<div class=b style='left:694px;top:599px;width:2px;height:2px;background:#7b85a8;'></div>
<div class=b style='left:697px;top:599px;width:2px;height:2px;background:#7b85a8;'></div>

</body></html>
